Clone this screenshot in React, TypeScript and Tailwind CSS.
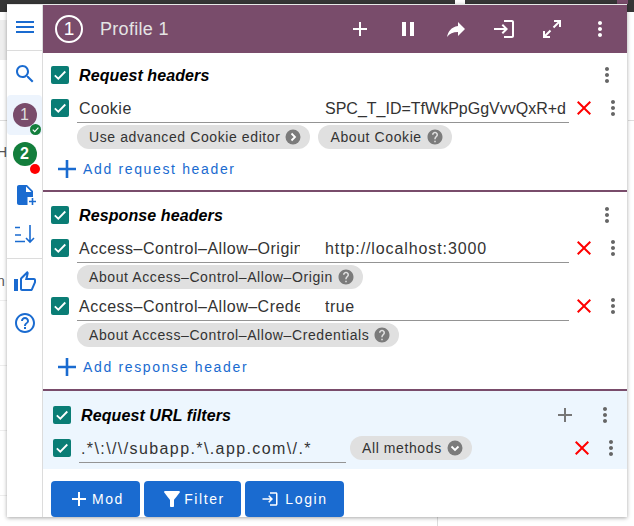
import type { ReactNode } from "react"

const P = {
  menu: "M3 18h18v-2H3v2zm0-5h18v-2H3v2zm0-7v2h18V6H3z",
  search: "M15.5 14h-.79l-.28-.27C15.41 12.59 16 11.11 16 9.5 16 5.91 13.09 3 9.5 3S3 5.91 3 9.5 5.91 16 9.5 16c1.61 0 3.09-.59 4.23-1.57l.27.28v.79l5 4.99L20.49 19l-4.99-5zm-6 0C7.01 14 5 11.99 5 9.5S7.01 5 9.5 5 14 7.01 14 9.5 11.99 14 9.5 14z",
  add: "M19 13h-6v6h-2v-6H5v-2h6V5h2v6h6v2z",
  addBold: "M21 13.3h-7.7V21h-2.6v-7.7H3v-2.6h7.7V3h2.6v7.7H21z",
  pause: "M6 19h4V5H6v14zm8-14v14h4V5h-4z",
  forward: "M14 9V5l7 7-7 7v-4.1c-5 0-8.5 1.6-11 5.1 1-5 4-10 11-11z",
  login: "M11 7L9.6 8.4l2.6 2.6H2v2h10.2l-2.6 2.6L11 17l5-5-5-5zm9 12h-8v2h8c1.1 0 2-.9 2-2V5c0-1.1-.9-2-2-2h-8v2h8v14z",
  more: "M12 8c1.1 0 2-.9 2-2s-.9-2-2-2-2 .9-2 2 .9 2 2 2zm0 2c-1.1 0-2 .9-2 2s.9 2 2 2 2-.9 2-2-.9-2-2-2zm0 6c-1.1 0-2 .9-2 2s.9 2 2 2 2-.9 2-2-.9-2-2-2z",
  close: "M19 6.41L17.59 5 12 10.59 6.41 5 5 6.41 10.59 12 5 17.59 6.41 19 12 13.41 17.59 19 19 17.59 13.41 12z",
  filter: "M4.25 5.61C6.27 8.2 10 13 10 13v6c0 .55.45 1 1 1h2c.55 0 1-.45 1-1v-6s3.72-4.8 5.74-7.39c.51-.66.04-1.61-.79-1.61H5.04c-.83 0-1.3.95-.79 1.61z",
  helpOutline: "M11 18h2v-2h-2v2zm1-16C6.48 2 2 6.48 2 12s4.48 10 10 10 10-4.48 10-10S17.52 2 12 2zm0 18c-4.41 0-8-3.59-8-8s3.59-8 8-8 8 3.59 8 8-3.59 8-8 8zm0-14c-2.21 0-4 1.79-4 4h2c0-1.1.9-2 2-2s2 .9 2 2c0 2-3 1.75-3 5h2c0-2.25 3-2.5 3-5 0-2.21-1.79-4-4-4z",
  help: "M12 2C6.48 2 2 6.48 2 12s4.48 10 10 10 10-4.48 10-10S17.52 2 12 2zm1 17h-2v-2h2v2zm2.07-7.75l-.9.92C13.45 12.9 13 13.5 13 15h-2v-.5c0-1.1.45-2.1 1.17-2.83l1.24-1.26c.37-.36.59-.86.59-1.41 0-1.1-.9-2-2-2s-2 .9-2 2H8c0-2.21 1.79-4 4-4s4 1.79 4 4c0 .88-.36 1.68-.93 2.25z",
  thumb: "M9 21h9c.83 0 1.54-.5 1.84-1.22l3.02-7.05c.09-.23.14-.47.14-.73v-2c0-1.1-.9-2-2-2h-6.31l.95-4.57.03-.32c0-.41-.17-.79-.44-1.06L14.17 1 7.58 7.59C7.22 7.95 7 8.45 7 9v10c0 1.1.9 2 2 2zM9 9l4.34-4.34L12 10h9v2l-3 7H9V9zM1 9h4v12H1z",
}

const Icon = ({ d, className }: { d: string; className: string }) => (
  <svg viewBox="0 0 24 24" fill="currentColor" className={className}>
    <path d={d} />
  </svg>
)

const Check = () => (
  <svg viewBox="0 0 18 18" className="w-[18px] h-[18px] shrink-0">
    <rect width="18" height="18" rx="2" fill="#0a7d75" />
    <path d="M3.8 9.3l3.5 3.4 7-7.2" fill="none" stroke="white" strokeWidth="1.8" />
  </svg>
)

const More = () => <Icon d={P.more} className="w-6 h-6 text-[#666]" />
const Del = () => <Icon d={P.close} className="w-6 h-6 text-[#f00]" />

const Chip = ({ label, kind = "help" }: { label: string; kind?: "help" | "right" | "down" }) => (
  <div className="flex items-center h-6 rounded-full bg-[#e0e0e0] pl-[12px] pr-[8px] gap-[4px] text-[14px] tracking-[0.6px] text-[#333] w-fit whitespace-nowrap">
    <span>{label}</span>
    {kind === "help" ? (
      <Icon d={P.help} className="w-[18px] h-[18px] text-[#7b7b7b]" />
    ) : (
      <svg viewBox="0 0 18 18" className="w-[18px] h-[18px]">
        <circle cx="9" cy="9" r="7.5" fill="#7b7b7b" />
        <path d={kind === "right" ? "M7.5 5.5L11 9l-3.5 3.5" : "M5.5 7.5L9 11l3.5-3.5"} fill="none" stroke="white" strokeWidth="1.8" />
      </svg>
    )}
  </div>
)

const HeaderRow = ({ name, value, valueClass }: { name: string; value: string; valueClass: string }) => (
  <div className="flex items-center h-[30px]">
    <div className="w-[34px] pl-[8px] flex"><Check /></div>
    <div className="flex w-[492px] h-[30px] border-b border-[#949494] text-[16px] text-[#333] leading-[30px] pt-[1px]">
      <div className="w-[223px] pl-[2px] overflow-hidden whitespace-nowrap tracking-[0.5px]">{name}</div>
      <div className="w-[25px]" />
      <div className={`flex-1 overflow-hidden whitespace-nowrap ${valueClass}`}>{value}</div>
    </div>
    <div className="ml-[3px]"><Del /></div>
    <div className="ml-[5px]"><More /></div>
  </div>
)

const Title = ({ text, extra, box = "w-9 pl-[8px]", end = "mr-[8px]" }: { text: string; extra?: ReactNode; box?: string; end?: string }) => (
  <div className="flex items-center h-6">
    <div className={`flex ${box}`}><Check /></div>
    <div className="flex-1 text-[16px] italic font-bold text-black pt-[1px] tracking-[0.1px]">{text}</div>
    {extra}
    <div className={end}><More /></div>
  </div>
)

const AddLink = ({ text }: { text: string }) => (
  <div className="flex items-center h-6 pl-[12px] gap-[4px] text-[14px] tracking-[1.65px] text-[#1a6bd0]">
    <Icon d={P.addBold} className="w-6 h-6" />
    <span>{text}</span>
  </div>
)

const Btn = ({ icon, label, w, gap }: { icon: ReactNode; label: string; w: string; gap: string }) => (
  <div className={`flex items-center justify-center h-9 rounded-[4px] bg-[#1a6bd0] text-white text-[14px] tracking-[1.6px] ${w} ${gap}`}>
    {icon}
    <span>{label}</span>
  </div>
)

export default function App() {
  return (
    <div className="relative w-[634px] h-[526px] overflow-hidden bg-white font-['Liberation_Sans',Arial,sans-serif]">
      {/* page behind the popup */}
      <div className="absolute inset-x-0 top-0 h-[12px] bg-[#363636]" />
      <div className="absolute left-[617px] top-0 w-[11px] h-[4px] bg-[#794c6b]" />
      <div className="absolute left-[455px] top-0 w-[10px] h-[4px] bg-white" />
      <div className="absolute left-0 top-[20px] w-[7px] h-[40px] bg-[#eeeeee]" />
      <div className="absolute left-0 top-[120px] w-[7px] h-px bg-[#dddddd]" />
      <div className="absolute left-[628px] top-[120px] w-[6px] h-px bg-[#dddddd]" />
      <div className="absolute left-0 top-[300px] w-[7px] h-px bg-[#eeeeee]" />
      <div className="absolute left-0 top-[365px] w-[7px] h-px bg-[#eeeeee]" />
      <div className="absolute left-0 top-[430px] w-[7px] h-px bg-[#eeeeee]" />
      <div className="absolute left-0 top-[495px] w-[7px] h-px bg-[#eeeeee]" />
      <div className="absolute left-[437px] top-[517px] w-px h-[9px] bg-[#dddddd]" />
      <div className="absolute left-[-3px] top-[142px] text-[14px] text-[#555]">H</div>
      <div className="absolute left-[-3px] top-[271px] text-[14px] text-[#555]">n</div>

      <div className="absolute left-[7px] top-[4px] w-[620px] h-[513px] flex bg-white border-t border-[#e8e8e8] shadow-[0_1px_4px_rgba(0,0,0,0.35)]">
        {/* sidebar */}
        <div className="w-[36px] shrink-0 border-r border-[#dcdcdc] flex flex-col items-center text-[#1a6bd0]">
          <div className="w-full h-[46px] pb-[2px] border-b border-[#dcdcdc] flex items-center justify-center">
            <Icon d={P.menu} className="w-6 h-6" />
          </div>
          <Icon d={P.search} className="w-6 h-6 mt-[11px]" />
          <div className="relative w-[35px] h-[40px] mt-[9px] rounded-[4px] bg-[#edf4fd] flex items-center justify-center">
            <div className="w-6 h-6 rounded-full bg-[#794c6b] text-[#ddd] text-[16px] flex items-center justify-center">1</div>
            <svg viewBox="0 0 12 12" className="absolute left-[23px] top-[29px] w-[11px] h-[11px]">
              <circle cx="6" cy="6" r="6" fill="#137e3c" />
              <path d="M3 6.2l2.2 2.2L9.2 4" fill="none" stroke="white" strokeWidth="1.3" />
            </svg>
          </div>
          <div className="relative w-[35px] h-[38px] flex items-center justify-center">
            <div className="w-6 h-6 rounded-full bg-[#137e3c] text-white text-[16px] font-bold flex items-center justify-center">2</div>
            <div className="absolute left-[23px] top-[29px] w-[10px] h-[10px] rounded-full bg-[#f00]" />
          </div>
          <svg viewBox="0 0 24 24" className="w-6 h-6 mt-[10px]" fill="currentColor">
            <path d="M14 2H6c-1.1 0-2 .9-2 2v16c0 1.1.9 2 2 2h8.5v-8H20V8l-6-6zm-1 7V3.5L18.5 9H13z" />
            <path d="M18.7 15h1.6v2.7H23v1.6h-2.7V22h-1.6v-2.7H16v-1.6h2.7z" />
          </svg>
          <svg viewBox="0 0 24 24" className="w-6 h-6 mt-[15px]" fill="none" stroke="currentColor" strokeWidth="1.6">
            <path d="M2 5.5h5M2 13h6M2 19.5h10M17 3v17M13 16l4 4 4-4" />
          </svg>
          <div className="w-full border-t border-[#dcdcdc] mt-[12px]" />
          <Icon d={P.thumb} className="w-6 h-6 mt-[11px]" />
          <Icon d={P.helpOutline} className="w-6 h-6 mt-[17px]" />
        </div>

        {/* main */}
        <div className="flex-1 flex flex-col min-w-0">
          <div className="h-[48px] bg-[#794c6b] flex items-center text-white shrink-0">
            <div className="ml-[12px] w-[28px] h-[28px] rounded-full border-2 border-white flex items-center justify-center text-[19px]">1</div>
            <div className="ml-[17px] flex-1 text-[18px] tracking-[0.3px] text-[#e4e4e4]">Profile 1</div>
            <div className="flex items-center gap-[24px] mr-[15px]">
              <Icon d={P.add} className="w-6 h-6" />
              <Icon d={P.pause} className="w-6 h-6" />
              <Icon d={P.forward} className="w-6 h-6" />
              <Icon d={P.login} className="w-6 h-6" />
              <svg viewBox="0 0 24 24" className="w-6 h-6" fill="none" stroke="currentColor" strokeWidth="2">
                <path d="M14 4h6v6M20 4l-6.5 6.5M10 20H4v-6M4 20l6.5-6.5" />
              </svg>
              <Icon d={P.more} className="w-6 h-6" />
            </div>
          </div>

          <section className="h-[139px] border-b-2 border-[#794c6b] pt-[10px] shrink-0">
            <Title text="Request headers" />
            <div className="mt-[6px]"><HeaderRow name="Cookie" value="SPC_T_ID=TfWkPpGgVvvQxR+d" valueClass="tracking-normal" /></div>
            <div className="flex gap-[8px] pl-[34px] mt-[2px]">
              <Chip label="Use advanced Cookie editor" kind="right" />
              <Chip label="About Cookie" />
            </div>
            <div className="mt-[8px]"><AddLink text="Add request header" /></div>
          </section>

          <section className="h-[199px] border-b-2 border-[#794c6b] pt-[11px] shrink-0">
            <Title text="Response headers" />
            <div className="mt-[6px]"><HeaderRow name="Access–Control–Allow–Origin" value="http://localhost:3000" valueClass="tracking-[0.9px]" /></div>
            <div className="pl-[34px] mt-[2px]"><Chip label="About Access–Control–Allow–Origin" /></div>
            <div className="mt-[2px]"><HeaderRow name="Access–Control–Allow–Credentials" value="true" valueClass="tracking-[0.5px]" /></div>
            <div className="pl-[34px] mt-[2px]"><Chip label="About Access–Control–Allow–Credentials" /></div>
            <div className="mt-[8px]"><AddLink text="Add response header" /></div>
          </section>

          <section className="h-[78px] bg-[#edf6fe] pt-[12px] shrink-0">
            <Title
              text="Request URL filters"
              box="w-[38px] pl-[10px]"
              end="mr-[10px]"
              extra={<Icon d={P.add} className="w-6 h-6 text-[#777] mr-[16px]" />}
            />
            <div className="flex items-center h-[30px] mt-[6px]">
              <div className="w-9 pl-[10px] flex"><Check /></div>
              <div className="w-[267px] h-[30px] border-b border-[#949494] text-[16px] text-[#333] leading-[30px] pt-[1px] pl-[2px] whitespace-nowrap tracking-[1.4px]">.*\:\/\/subapp.*\.app.com\/.*</div>
              <div className="ml-[4px]"><Chip label="All methods" kind="down" /></div>
              <div className="ml-auto mr-[5px]"><Del /></div>
              <div className="mr-[4px]"><More /></div>
            </div>
          </section>

          <div className="flex gap-[4px] pl-[8px] mt-[12px]">
            <Btn icon={<Icon d={P.add} className="w-6 h-6" />} label="Mod" w="w-[89px]" gap="gap-[1px]" />
            <Btn icon={<Icon d={P.filter} className="w-6 h-6" />} label="Filter" w="w-[97px]" gap="gap-0" />
            <Btn icon={<Icon d={P.login} className="w-[18px] h-[18px]" />} label="Login" w="w-[99px]" gap="gap-[6px]" />
          </div>
        </div>
      </div>
    </div>
  )
}
